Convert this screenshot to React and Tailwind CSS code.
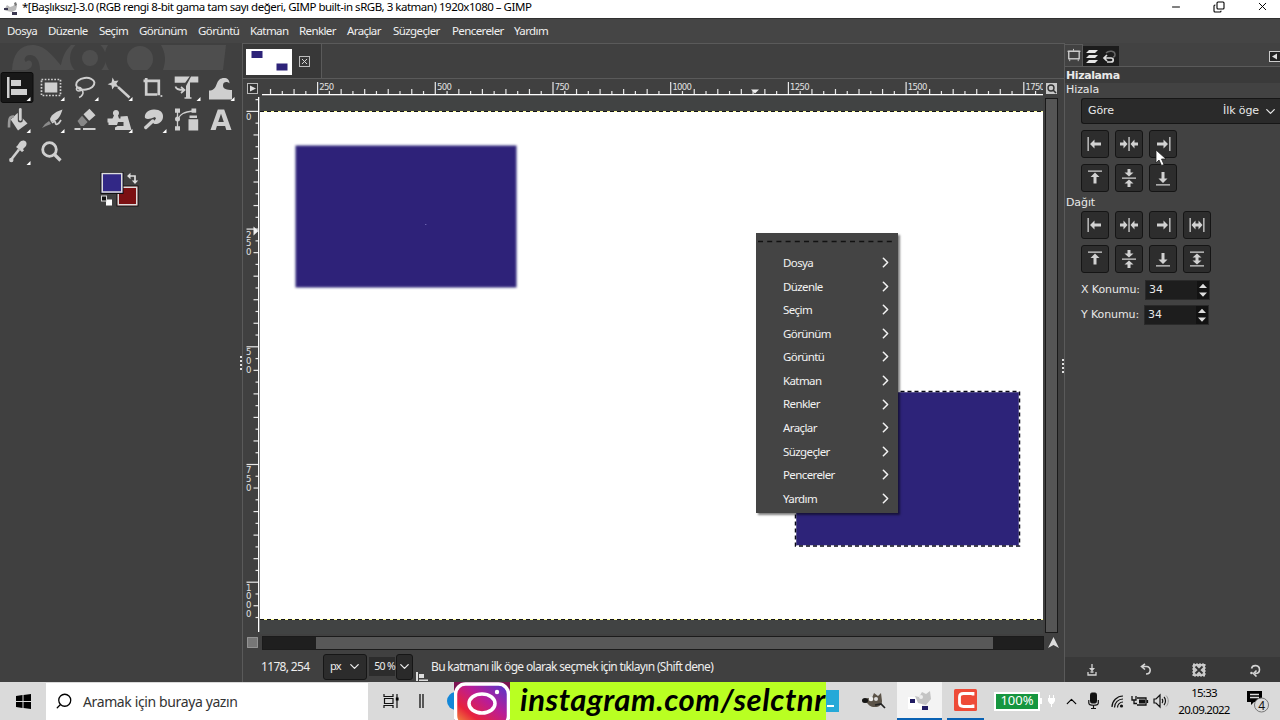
import {
  Minus,
  Copy,
  X,
  ChevronDown,
  ChevronUp,
  ChevronRight,
  Search,
} from "lucide-react";

const MENUS = [
  ["Dosya", "w-[41px]"],
  ["Düzenle", "w-[51px]"],
  ["Seçim", "w-[40px]"],
  ["Görünüm", "w-[59px]"],
  ["Görüntü", "w-[52px]"],
  ["Katman", "w-[49px]"],
  ["Renkler", "w-[48px]"],
  ["Araçlar", "w-[46px]"],
  ["Süzgeçler", "w-[59px]"],
  ["Pencereler", "w-[62px]"],
  ["Yardım", "w-[40px]"],
];

const UI = "font-['Noto_Sans',sans-serif]";
const PANEL = "font-['DejaVu_Sans',sans-serif]";

function TitleBar() {
  return (
    <header className="flex h-[18px] items-center bg-white text-black">
      <svg className="ml-[3px] h-[14px] w-4" viewBox="0 0 16 14">
        <path d="M4 3l3 2 3-1 3-3 1 3-1 4-4 2-5-1-3-1z" fill="#b9b9b9" />
        <rect x="1" y="6" width="4" height="2" fill="#3b3850" />
        <rect x="9" y="10" width="5" height="3" fill="#3b3850" />
        <path d="M11 1l2-1 1 3-2 1z" fill="#777" />
      </svg>
      <span
        className={`${UI} ml-[3px] -mt-[4px] w-[520px] whitespace-nowrap text-[11.5px] tracking-[-0.48px]`}
      >
        *[Başlıksız]-3.0 (RGB rengi 8-bit gama tam sayı değeri, GIMP built-in
        sRGB, 3 katman) 1920x1080 – GIMP
      </span>
      <div className="-mt-[5px] ml-auto flex items-center gap-[31px] pr-[11px]">
        <Minus size={12} strokeWidth={2} />
        <Copy size={12} strokeWidth={2.2} className="-scale-y-100 -scale-x-100 rotate-90" />
        <X size={13} strokeWidth={1.8} />
      </div>
    </header>
  );
}

function MenuBar() {
  return (
    <nav
      className={`${UI} flex h-[25px] items-center border-t border-[#303030] bg-[#454545] pl-[7px] text-[11.5px] tracking-[-0.6px] text-[#f0f0f0]`}
    >
      {MENUS.map(([name, width]) => (
        <span key={name} className={`${width} whitespace-nowrap`}>
          {name}
        </span>
      ))}
    </nav>
  );
}

const TOOLS = [
  // align
  <>
    <path d="M7 5h2.5v21H7zM11 8h10v6H11zM11 17h16v6H11z" />
  </>,
  // rectangle select
  <>
    <rect x="10.7" y="10.5" width="12.6" height="10" />
    <rect x="7.5" y="7.500" width="19" height="16" fill="none" stroke="#d0d0d0" strokeWidth="1.7" strokeDasharray="1.7 1.5" />
  </>,
  // lasso
  <>
    <g fill="none" stroke="#cfcfcf" strokeWidth="2">
      <ellipse cx="17.300" cy="11.800" rx="9.200" ry="5.800" transform="rotate(-8 17 12)" />
      <path d="M9.500 15c-2 2-1 4 1.500 4s3-3 .5-3.500c2 2 5 4 3 7-.8 1.500-2 2.500-3.500 3" strokeWidth="1.600" />
    </g>
  </>,
  // fuzzy select
  <>
    <path d="M10.500 5.500l2 3.500 4-.6-2.200 3.400 2.200 3.200-4-.6-2.300 3.200-.6-4-4-1.400 4-1.800z" />
    <path d="M16 15l11.500 10.500" stroke="#cfcfcf" strokeWidth="2.400" />
  </>,
  // crop
  <>
    <path d="M10.200 6v16.500h11M7.500 8.800h15.300v14.500" fill="none" stroke="#cfcfcf" strokeWidth="2.700" />
    <path d="M24.500 24h1.800" stroke="#cfcfcf" strokeWidth="1.800" />
  </>,
  // unified transform
  <>
    <path d="M4.700 4.500h15l-4.500 6.300H4.700zM21 4.500h7.300v6H20v14.800h1.500v1.500h-7v-1.500H16V14z" />
    <path d="M5.500 14.500c.5 3 3 3.500 8 3.500M11 15l3.500 3-3.500 3" fill="none" stroke="#cfcfcf" strokeWidth="1.700" />
  </>,
  // warp
  <>
    <path d="M5 27.500V18.500c4 0 6-2 7.500-6 1.500-4.500 4-6.500 7.500-6.500 3.500 0 5.500 2 5.500 5.500-1.500-2-6.500-2.500-6.500 2 0 3.500 4 4.500 9 4.500v9.500z" />
  </>,
  // bucket fill
  <>
    <path d="M10.700 15.500L17.500 9l10 10.500-9.500 7z" />
    <path d="M14 12.500c-4.500-.5-5 2-5 11" fill="none" stroke="#999" strokeWidth="2.600" />
    <path d="M20.300 4v12" stroke="#404040" strokeWidth="5" strokeLinecap="round" />
    <path d="M20.300 5.500v10" stroke="#cfcfcf" strokeWidth="2.800" strokeLinecap="round" />
  </>,
  // paintbrush
  <>
    <path d="M28.500 5.500c-5 1.500-11 4.500-12.500 9.500l1 3 3.500-1c4-2 6-5 8-11.500z" />
    <path d="M18 19c1.500-1.500 3.500-2 3.500 0s2.500 2.500 5.500-3" fill="none" stroke="#cfcfcf" strokeWidth="1.700" />
    <path d="M15 17l2 3-5 2-4 2 3-4z" fill="#8b8b8b" />
  </>,
  // eraser
  <>
    <path d="M21.500 4.800l6 6.400-6.300 5.500-5.700-6.400z" />
    <path d="M14 11.800l5.600 6.200-4 4h-2.800L9.500 17z" fill="#878787" />
    <path d="M6.500 25h6M15 25h12.500" stroke="#cfcfcf" strokeWidth="1.800" />
  </>,
  // clone
  <>
    <path d="M5.500 14.500h5l1.500-3c-2-2-1-5.500 2-5.500s4 3.500 2 5.500l1 3h3.500V18H16l-1 3H6.500v-2.500h-1z" />
    <path d="M18.500 12.500l7-.5 4 14H13v-2.500l2.500-1.500h6v-4h-3z" />
  </>,
  // smudge
  <>
    <path d="M9 14c-1-5 4-9 9.500-8.500C24 5.500 27.500 8.500 27 13c-.3 4-3 6.500-6.500 7-2 .2-3-.4-3.500-1.500l3-4-1-1.500-4 1.500c-2 .5-4 1-6-.5z" />
    <path d="M9.800 23.500l7-6.500" stroke="#cfcfcf" strokeWidth="3.400" strokeLinecap="round" />
  </>,
  // paths
  <>
    <path d="M7.500 7v18M8 15c2-5 6-7 15-8" fill="none" stroke="#cfcfcf" strokeWidth="1.300" />
    <path d="M5 4.500h5v4.300H5zM5 22.300h5v4.300H5zM21.500 4.500h4.700v4.300h-4.700zM19.500 11.500h7.500v2.500h-7.500zM18.500 15.200h9.700v11.300h-9.700z" />
    <circle cx="7.500" cy="15" r="2.500" />
  </>,
  // text
  <>
    <path d="M13.800 5.500h6.400l7.300 20.500h-5.200l-1.200-4h-8.200l-1.200 4H6.500zM14.200 18h5.600L17 9.800z" fillRule="evenodd" />
  </>,
  // color picker
  <>
    <path d="M19.500 6.500c2.500-4 9-2 6.500 3.500l-3 3 1 1.500-2 1.500-6-5 1.500-1.500z" />
    <path d="M19 13.500l-7 9" stroke="#cfcfcf" strokeWidth="2.600" />
    <circle cx="11.300" cy="24" r="2.200" />
  </>,
  // zoom
  <>
    <circle cx="15.500" cy="13.500" r="6.800" fill="none" stroke="#cfcfcf" strokeWidth="2.800" />
    <path d="M20.500 18.500l6 6" stroke="#cfcfcf" strokeWidth="3.200" />
  </>,
];

// tools without a group menu
const NO_CORNER = [4, 9, 12, 13, 15];

function Toolbox() {
  return (
    <aside className="flex w-[242px] shrink-0 items-start bg-[#404040]">
      <div className="w-[240px]">
        <svg className="block h-[29px] w-[240px]" viewBox="0 0 240 29">
          <g fill="#4e4e4e">
            <path d="M12 27c1-16 8-25 20-25 13 0 19 9 33 25H40c0-9-4-15-10-15-5 0-7 5-4 7 3-3 6-1 6 2 0 4-4 6-8 6z" />
            <path d="M60 27c2-11 4-18 11-25h37c-5 8-4 17 1 25z" />
            <path d="M161 2h65l-3 25h-60c3-9 3-16-2-25z" />
            <circle cx="140" cy="16" r="13" />
          </g>
          <circle cx="88" cy="15" r="18" fill="#404040" />
          <circle cx="90" cy="15" r="8" fill="#4e4e4e" />
          <rect y="27" width="240" height="2" fill="#404040" />
        </svg>
        <div className="grid w-[238px] grid-cols-7">
          {TOOLS.map((icon, i) => (
            <svg key={i} className="h-8 w-[34px]" viewBox="0 0 34 32" fill="#cfcfcf">
              {i === 0 && (
                <rect x="1" y=".5" width="32" height="30" rx="2" fill="#181818" stroke="#0c0c0c" />
              )}
              {icon}
              {!NO_CORNER.includes(i) && <path d="M30.500 25v4h-4z" fill="#fff" />}
            </svg>
          ))}
        </div>
        <svg className="ml-[100px] mt-[4px] block h-10 w-10" viewBox="0 0 40 40">
          <rect x="17" y="14" width="21" height="20" fill="#7b1012" stroke="#111" />
          <rect x="18.250" y="15.250" width="18.500" height="17.500" fill="#7b1012" stroke="#ddd" strokeWidth="1.500" />
          <rect x="1" y=".5" width="22" height="21" fill="#322886" stroke="#111" />
          <rect x="2.250" y="1.500" width="19.500" height="18.500" fill="#322886" stroke="#ddd" strokeWidth="1.500" />
          <path d="M28 4h7v6" fill="none" stroke="#ddd" strokeWidth="1.700" />
          <path d="M30.500 .8v6.400L27 4zM31.800 8.500h6.400L35 12z" fill="#ddd" />
          <rect x="6" y="27.500" width="6" height="6" fill="#fff" />
          <rect x="1.500" y="24" width="5" height="5" fill="#111" stroke="#ddd" />
        </svg>
      </div>
      <div className="flex h-full items-center">
        <Grip />
      </div>
    </aside>
  );
}

function Grip() {
  return (
    <span className="flex flex-col gap-[2px]">
      {[0, 1, 2, 3].map((n) => (
        <i key={n} className="h-[2px] w-[2px] bg-[#e0e0e0]" />
      ))}
    </span>
  );
}

const STEP = 11.77;

function HorizontalRuler() {
  const ticks = [];
  for (let i = 6; i < 72; i++) ticks.push(i);
  return (
    <svg className="block h-[18px] w-[784px] shrink-0" viewBox="0 0 784 18">
      {ticks.map((i) => {
        const x = 199.8 + i * STEP - 259;
        const major = i % 10 === 0;
        const h = major ? 12 : i % 2 ? 3 : 5;
        return (
          <g key={i}>
            <rect x={x - 0.5} y={14 - h} width="1.200" height={h} fill="#e8e8e8" />
            {major && (
              <text x={x + 1.8} y="10" fontSize="8.500" letterSpacing="-.7" fill="#e0e0e0" className={PANEL}>
                {i * 25}
              </text>
            )}
          </g>
        );
      })}
      <rect x="3" y="14" width="781" height="1.300" fill="#fff" />
      <path d="M492 9.500h8l-4 4z" fill="#eee" />
    </svg>
  );
}

function VerticalRuler() {
  const ticks = [];
  for (let i = -1; i < 44; i++) ticks.push(i);
  return (
    <svg className="block h-[537px] w-[15px] shrink-0" viewBox="0 0 15 537">
      {ticks.map((i) => {
        const y = 14.3 + i * STEP;
        const major = i % 10 === 0;
        const w = major ? 12 : i % 2 ? 3 : 5;
        return (
          <g key={i}>
            <rect x={13.5 - w} y={y - 0.5} width={w} height="1.200" fill="#e8e8e8" />
            {major &&
              String(i * 25)
                .split("")
                .map((d, n) => (
                  <text key={n} x="1" y={y + 8.5 + n * 8.8} fontSize="8.500" fill="#e0e0e0" className={PANEL}>
                    {d}
                  </text>
                ))}
          </g>
        );
      })}
      <rect x="13" width="1.300" height="535" fill="#fff" />
      <path d="M8.500 129.500v9l5-4.500z" fill="#eee" />
    </svg>
  );
}

function ContextMenu() {
  return (
    <div
      className={`${UI} absolute left-[496px] top-[136px] h-[280px] w-[142px] bg-[#444] pt-[7px] text-[11.5px] tracking-[-0.6px] text-[#f2f2f2] shadow-[2px_2px_2px_rgba(0,0,0,.5)]`}
    >
      <svg className="block h-[3px] w-[142px]">
        <path d="M2 1.500h138" stroke="#111" strokeWidth="1.300" strokeDasharray="5 4.200" />
      </svg>
      <ul className="pt-[8px]">
        {MENUS.map(([name]) => (
          <li key={name} className="flex h-[23.55px] items-center justify-between pl-[27px] pr-[4px]">
            {name}
            <ChevronRight size={17} strokeWidth={2.2} />
          </li>
        ))}
      </ul>
    </div>
  );
}

function Canvas() {
  return (
    <div className="relative h-[537px] w-[783px] shrink-0 overflow-hidden bg-[#414343]">
      <svg className="absolute left-0 top-0 h-[537px] w-[783px]" viewBox="0 0 783 537">
        <defs>
          <filter id="soft" x="-2%" y="-2%" width="104%" height="104%">
            <feGaussianBlur stdDeviation=".9" />
          </filter>
        </defs>
        <rect y="14" width="783" height="509" fill="#fff" />
        <path d="M0 14.500h783M0 522.500h783" stroke="#ffffa0" />
        <path d="M0 14.500h783M0 522.500h783" stroke="#151515" strokeDasharray="4 3" />
        <rect x="35.500" y="48.500" width="221" height="142" fill="#2d2379" filter="url(#soft)" />
        <rect x="165.300" y="127" width="1" height="1" fill="#827bc4" />
        <rect x="535.500" y="294.500" width="224" height="154.500" fill="#2d2379" />
        <rect x="535.500" y="294.500" width="224" height="154.500" fill="none" stroke="#fff" strokeWidth="1.500" />
        <rect x="535.500" y="294.500" width="224" height="154.500" fill="none" stroke="#080818" strokeWidth="1.500" strokeDasharray="4 3" />
      </svg>
      <ContextMenu />
    </div>
  );
}

function ImageWindow() {
  return (
    <main className="flex w-[822px] shrink-0 flex-col border-l border-[#5a5a5a] bg-[#404040]">
      <div className="flex h-[36px] border-b border-t border-[#5a5a5a]">
        <div className="flex h-full w-[79px] items-start border-r border-[#5a5a5a] bg-[#383838] pl-[3px] pt-[5px]">
          <svg className="h-[26px] w-[46px]" viewBox="0 0 46 26">
            <rect width="46" height="26" fill="#fff" />
            <rect x="5.500" y="2" width="11" height="7" fill="#2d2379" />
            <rect x="30.500" y="14.500" width="11" height="7" fill="#2d2379" />
          </svg>
          <span className="ml-[7px] mt-[7px] flex h-[11px] w-[11px] items-center justify-center border border-[#bdbdbd]">
            <X size={9} strokeWidth={2.6} className="shrink-0 text-[#ddd]" />
          </span>
        </div>
      </div>
      <div className="flex h-[18px] items-center pl-[4px] pt-px">
        <svg className="h-[11px] w-[12px] shrink-0" viewBox="0 0 12 11">
          <rect x=".5" y=".5" width="10" height="10" fill="#353535" stroke="#bbb" />
          <path d="M3 2.500l6 3-6 3z" fill="#ddd" />
        </svg>
        <HorizontalRuler />
        <svg className="ml-[2px] h-[13px] w-[13px] shrink-0" viewBox="0 0 13 13">
          <rect x="1" y="1" width="11" height="11" fill="#c8c8c8" />
          <circle cx="6" cy="6" r="3" fill="none" stroke="#333" strokeWidth="1.400" />
          <path d="M8 8l3 3" stroke="#333" strokeWidth="1.600" />
        </svg>
      </div>
      <div className="flex h-[537px] pl-[2px]">
        <VerticalRuler />
        <Canvas />
        <div className="ml-[2px] mt-[1px] h-[535px] w-[13px] shrink-0 border border-[#191919] bg-[#555]" />
        <div className="flex items-center pl-[4px]">
          <Grip />
        </div>
      </div>
      <div className="flex h-[17px] items-center pl-[4px]">
        <svg className="mr-[4px] h-[11px] w-[11px]" viewBox="0 0 11 11">
          <rect x=".5" y=".5" width="10" height="10" fill="#777" stroke="#ccc" strokeDasharray="1 1" />
        </svg>
        <div className="h-[14px] w-[782px] border border-[#1b1b1b] bg-[#1f1f1f] pl-[53px]">
          <div className="h-full w-[677px] bg-[#585858]" />
        </div>
        <svg className="ml-[3px] h-[13px] w-[13px]" viewBox="0 0 13 13">
          <path d="M6.500 1l5.500 11-5.500-3L1 12z" fill="#ddd" />
        </svg>
      </div>
      <div className={`${UI} flex h-[31px] items-center pl-[18px] text-[12px] tracking-[-0.67px] text-[#eee]`}>
        <span className="w-[62px]">1178, 254</span>
        <span className="flex h-[26px] w-[44px] items-center justify-between rounded-[3px] border border-[#161616] bg-[#2c2c2c] pl-[6px] pr-[4px] text-[11px]">
          px
          <ChevronDown size={15} strokeWidth={2} />
        </span>
        <span className="ml-[2px] flex h-[19px] w-[26px] items-center justify-end whitespace-nowrap bg-[#2c2c2c] text-[10.5px]">
          50 %
        </span>
        <span className="ml-px flex h-[26px] w-[17px] items-center justify-center rounded-[3px] border border-[#161616] bg-[#2a2a2a]">
          <ChevronDown size={15} strokeWidth={2} className="shrink-0" />
        </span>
        <svg className="ml-[3px] mt-[19px] h-[9px] w-[13px]" viewBox="0 0 13 9">
          <path d="M0 0h2v9H0zM3 2h5v4H3zM3 7.500h9V9H3z" fill="#ddd" />
        </svg>
        <span className="ml-[2px] mt-px whitespace-nowrap">
          Bu katmanı ilk öge olarak seçmek için tıklayın (Shift dene)
        </span>
      </div>
    </main>
  );
}

// drawn in a 28x28 button
const ALIGN = {
  left: <path d="M6.500 7h1.300v14H6.500zM9 14l4.500-4.500v3H20v3h-6.500v3z" />,
  hcenter: <path d="M13.400 7h1.300v14h-1.300zM5 12.500h3.500V9.500L12.500 14l-4 4.500v-3H5zM23 12.500h-3.500V9.500L15.500 14l4 4.500v-3H23z" />,
  right: <path d="M20.200 7h1.300v14h-1.300zM19 14l-4.500-4.500v3H8v3h6.500v3z" />,
  hfill: <path d="M6.500 7h1.300v14H6.500zM20.200 7h1.300v14h-1.300zM8.500 14l4-4.500v3h3v-3l4 4.500-4 4.500v-3h-3v3z" />,
  top: <path d="M7 6.500h14v1.300H7zM14 8.500l4.500 4.500h-3v6.500h-3V13h-3z" />,
  vcenter: <path d="M7 13.400h14v1.300H7zM12.500 5v3.500H9.500L14 12.500l4.500-4h-3V5zM12.500 23v-3.500H9.500L14 15.500l4.500 4h-3V23z" />,
  bottom: <path d="M7 20.200h14v1.300H7zM14 19l4.500-4.500h-3V8h-3v6.500h-3z" />,
  vfill: <path d="M7 6.500h14v1.300H7zM7 20.200h14v1.300H7zM14 8.500l4.500 4h-3v3h3l-4.500 4-4.500-4h3v-3h-3z" />,
};

function AlignRow({ kinds }) {
  return (
    <div className="flex gap-[6px]">
      {kinds.map((kind) => (
        <button key={kind} className="h-7 w-7 rounded-[3px] border border-[#151515] bg-[#2d2d2d]">
          <svg className="-m-px h-7 w-7" viewBox="0 0 28 28" fill="#d2d2d2">
            {ALIGN[kind]}
          </svg>
        </button>
      ))}
    </div>
  );
}

function Position({ label, shift }) {
  return (
    <div className="flex h-5 items-center">
      <span className={shift ? "w-[63px]" : "w-[64px]"}>{label}</span>
      <span className="flex h-5 w-[65px] items-center border border-[#2a2a2a] bg-[#1d1d1d] pl-[3px]">
        34
        <svg className="ml-auto h-[18px] w-[12px] bg-[#121212]" viewBox="0 0 12 18">
          <path d="M2 7l4-4.200L10 7zM2 11.500l4 4.200 4-4.200z" fill="#ddd" />
        </svg>
      </span>
    </div>
  );
}

function ToolOptions() {
  return (
    <aside className={`${PANEL} relative flex w-[216px] flex-col border-l border-[#5a5a5a] bg-[#424242] text-[11px] tracking-[-0.1px] text-[#e8e8e8]`}>
      <div className="flex h-[24px] items-end border-b border-[#5a5a5a]">
        <svg className="h-[22px] w-[18px] border-r border-t border-[#5a5a5a]" viewBox="0 0 18 22">
          <rect x="4" y="6.500" width="11" height="8" fill="none" stroke="#ddd" strokeWidth="1.300" />
          <path d="M2.500 6.500h14M9 4v2M5 17v-2M14 17v-2" stroke="#ccc" />
        </svg>
        <svg className="h-[20px] w-[36px] bg-[#1c1c1c]" viewBox="0 0 36 20">
          <path d="M6 4h9l-3 3H3zM6 9h9l-3 3H3zM6 14h9l-3 3H3z" fill="#e5e5e5" />
          <path d="M23 7c3-3 9-2 9 1.500 0 1.500-1 2.500-2 2.500" fill="none" stroke="#666" strokeWidth="1.500" />
          <path d="M21 12h7c3 0 3 4 0 4h-4M24 9l-3 3 3 3" fill="none" stroke="#ddd" strokeWidth="1.700" />
        </svg>
        <svg className="mb-[4px] ml-auto h-[11px] w-[11px]" viewBox="0 0 11 11">
          <rect x=".5" y=".5" width="12" height="10" fill="#222" stroke="#ccc" />
          <path d="M8 2.500v6l-5-3z" fill="#ddd" />
        </svg>
      </div>
      <div className="h-[16px] bg-[#3a3a3a] pl-[1px] font-bold leading-[18px] tracking-[-0.4px]">Hizalama</div>
      <div className="h-[15px] pl-[1px] leading-[14px]">Hizala</div>
      <div className="pl-[16px]">
        <div className="flex h-[26px] items-center rounded-l-[3px] border border-r-0 border-[#161616] bg-[#2a2a2a] pl-[6px] pr-[2px] pt-px">
          Göre
          <span className="ml-auto mr-[4px]">İlk öge</span>
          <ChevronDown size={15} strokeWidth={2} />
        </div>
      </div>
      <div className="flex flex-col gap-[6px] pl-[16px] pt-[6px]">
        <AlignRow kinds={["left", "hcenter", "right"]} />
        <AlignRow kinds={["top", "vcenter", "bottom"]} />
      </div>
      <div className="h-[19px] pl-[1px] leading-[22px]">Dağıt</div>
      <div className="flex flex-col gap-[6px] pl-[16px]">
        <AlignRow kinds={["left", "hcenter", "right", "hfill"]} />
        <AlignRow kinds={["top", "vcenter", "bottom", "vfill"]} />
      </div>
      <div className="flex flex-col gap-[5px] pl-[16px] pt-[7px]">
        <Position label="X Konumu:" />
        <Position label="Y Konumu:" shift />
      </div>
      <div className="mt-auto flex h-[25px] items-center bg-[#393939] pl-[21px]">
        <svg className="h-[14px] w-[190px] shrink-0" viewBox="0 0 190 14" fill="none" stroke="#d4d4d4">
          <path d="M6 1v5M2 9v3h8V9M4.500 9h3" strokeWidth="1.300" />
          <path d="M3 5h6L6 8.500z" fill="#d4d4d4" stroke="none" />
          <path d="M55.500 3.500h5c5 0 5 7.500-.5 7.500M59 .8l-3.500 2.700L59 6.500" strokeWidth="1.600" />
          <rect x="107" y="1" width="12" height="12" fill="#c8c8c8" strokeDasharray="2 1" />
          <path d="M109.500 3.500l7 7M116.500 3.500l-7 7" stroke="#333" strokeWidth="1.800" />
          <path d="M165.500 5.500c1-4 8-4 8 1.200 0 2.500-2 3.800-4.500 3.800M170.500 7.500l-3 3 3 3" strokeWidth="1.600" />
          <circle cx="165.500" cy="10" r="1.300" fill="#d4d4d4" stroke="none" />
        </svg>
      </div>
      {/* mouse pointer */}
      <svg className="absolute left-[90px] top-[106px] h-[18px] w-[12px]" viewBox="0 0 12 18">
        <path d="M1 1v13l3-3 2.500 5.500 2.500-1L6.500 10H11z" fill="#fff" stroke="#222" strokeWidth=".8" />
      </svg>
    </aside>
  );
}

function InstagramBanner() {
  return (
    <div className="flex h-[38px] w-[372px] overflow-hidden bg-[#b9ff22]">
      <svg className="h-[38px] w-14 shrink-0" viewBox="0 0 56 38">
        <defs>
          <linearGradient id="ig" x1="0" y1="1" x2="1" y2="0">
            <stop offset="0" stopColor="#f3a73c" />
            <stop offset=".28" stopColor="#e8243c" />
            <stop offset=".6" stopColor="#b91c98" />
            <stop offset="1" stopColor="#4a3ad0" />
          </linearGradient>
        </defs>
        <rect width="56" height="38" fill="#7d1352" />
        <rect x="1.500" y="2" width="53" height="42" rx="10" fill="url(#ig)" stroke="#fff" strokeWidth="3.500" />
        <ellipse cx="28" cy="21.500" rx="13" ry="9.500" fill="none" stroke="#fff" strokeWidth="3.500" />
        <circle cx="43" cy="10" r="2.200" fill="#fff" />
      </svg>
      <span className="ml-[10px] whitespace-nowrap font-['Lato',sans-serif] text-[31px] font-bold italic leading-[35px] tracking-[0.6px] text-black">
        instagram.com/selctnr
      </span>
    </div>
  );
}

function Taskbar() {
  return (
    <footer className={`${UI} flex h-[38px] items-center bg-[#dadada] text-black`}>
      <div className="flex h-full w-[46px] items-center justify-center">
        <svg className="h-[15px] w-[15px]" viewBox="0 0 15 15">
          <path d="M0 2l6.500-1v6H0zM7.500 1L15 0v7H7.500zM0 8h6.500v6L0 13zM7.500 8H15v7l-7.500-1z" />
        </svg>
      </div>
      <div className="flex h-[37px] w-[322px] items-center bg-white pl-[9px] text-[14px] tracking-[-0.38px] text-[#333]">
        <Search size={18} strokeWidth={1.7} className="-scale-x-100 text-black" />
        <span className="ml-[10px] whitespace-nowrap">Aramak için buraya yazın</span>
      </div>
      <svg className="ml-[14px] h-[20px] w-[72px]" viewBox="0 0 72 20">
        <path d="M2 3v2.500h9V3M2 17v-2.500h9V17M2.500 7.500h8.500v5H2.500zM15 3v14" fill="none" stroke="#111" strokeWidth="1.200" />
        <rect x="13.800" y="6.500" width="2.800" height="3" />
        <path d="M38 3v14M41 3v14" stroke="#111" strokeWidth="1.300" />
        <circle cx="74" cy="10" r="9" fill="#1387d8" />
      </svg>
      <InstagramBanner />
      <div className="flex h-[22px] w-[13px] items-end bg-[#25a9d8] pb-[5px]">
        <i className="ml-px h-[2px] w-[7px] bg-white" />
      </div>
      <svg className="ml-[22px] h-[20px] w-[25px]" viewBox="0 0 25 20">
        <path d="M1 9l6-2 4 0 2-5 4 3 3-3 1 8c0 4-3 6-7 6-5 0-6-2-8-4l-4-1z" fill="#5b5348" />
        <circle cx="10" cy="8" r="2.300" fill="#eee" />
        <circle cx="15" cy="8" r="2" fill="#ddd" />
        <ellipse cx="4" cy="9.500" rx="3" ry="2.500" fill="#151515" />
        <path d="M14 14l6-1 4 4" fill="none" stroke="#222" strokeWidth="1.700" />
      </svg>
      <div className="ml-[11px] flex h-full w-[45px] items-center justify-center border-b-2 border-[#0a62b3] bg-[#f3f3f3]">
        <svg className="h-[24px] w-[28px]" viewBox="0 0 28 24">
          <rect x="2" y="9" width="14" height="12" fill="#fff" />
          <path d="M9 8l4 1 3-5 4 2 4-3 1 8-5 6-8-2z" fill="#c4c4c4" />
          <circle cx="15" cy="9" r="2" fill="#eee" />
          <rect x="4" y="11" width="5" height="4" fill="#211c63" />
          <rect x="16" y="18" width="6" height="4" fill="#211c63" />
        </svg>
      </div>
      <div className="ml-[5px] flex h-full w-[37px] items-center justify-center border-b-2 border-[#0a62b3]">
        <svg className="h-[22px] w-[23px]" viewBox="0 0 23 22">
          <rect width="23" height="22" rx="1.500" fill="#ee4b38" />
          <path d="M19 6.500V4.500H9.500C7 4.500 5.500 6 5.500 8v6c0 2 1.500 3.500 4 3.500H19v-2" fill="none" stroke="#fff" strokeWidth="2.800" />
        </svg>
      </div>
      <div className="ml-[10px] flex h-[19px] w-[46px] items-center justify-center border-2 border-white bg-[#16963f] text-[13px] text-white">
        100%
      </div>
      <svg className="h-[12px] w-[16px]" viewBox="0 0 16 12">
        <path d="M0 3h2v6H0zM8 3h7v3l-2 3h-3L8 6zM9 0h1v3H9zM13 0h1v3h-1zM11 9h1v3h-1z" fill="#fff" />
      </svg>
      <ChevronUp size={17} strokeWidth={1.7} className="ml-[7px]" />
      <svg className="ml-[7px] h-[18px] w-[82px]" viewBox="0 0 80 18" fill="none" stroke="#111">
        <rect x="2.500" y="1" width="6" height="10" rx="1.500" fill="#111" />
        <path d="M.8 8v3c0 3 9.500 3 9.500 0V8M5.500 13v4M3 16.500h5" strokeWidth="1.200" />
        <path d="M24 15c0-6 5-11 11-11M26.500 15.500c0-5 4-8.500 8.500-8.500M29.500 15.500c0-3 2.500-5.500 5.500-5.500" strokeWidth="1.200" />
        <circle cx="33.500" cy="14" r="1.600" fill="#111" stroke="none" />
        <path d="M49 6h9v7h-9M44 4v4h4V4M46 8v3.500h3M59.500 8v3" strokeWidth="1.300" />
        <rect x="51" y="7.500" width="6" height="4" fill="#111" stroke="none" />
        <path d="M66 7h2l4-4v12l-4-4h-2zM74 7c1 1 1 3 0 4M76 5c2 2 2 6 0 8" strokeWidth="1.200" />
        <path d="M78 3.500c3 3 3 8 0 11" stroke="#999" />
      </svg>
      <div className="ml-[7px] flex w-[56px] flex-col items-center text-[11.5px] leading-[17px] tracking-[-0.75px]">
        <span>15:33</span>
        <span>20.09.2022</span>
      </div>
      <svg className="ml-[14px] h-[24px] w-[26px]" viewBox="0 0 26 24">
        <path d="M1 2h15v11H8l-3 3v-3H1z" />
        <path d="M4 5.500h9M4 8.500h9" stroke="#ddd" strokeWidth="1.300" />
        <circle cx="15.500" cy="16" r="7" fill="#dadada" stroke="#777" />
        <text x="12.300" y="20.500" fontSize="12" fill="#111">
          4
        </text>
      </svg>
    </footer>
  );
}

export default function App() {
  return (
    <div className="flex h-[720px] w-[1280px] flex-col overflow-hidden bg-[#404040]">
      <TitleBar />
      <MenuBar />
      <div className="flex h-[639px]">
        <Toolbox />
        <ImageWindow />
        <ToolOptions />
      </div>
      <Taskbar />
    </div>
  );
}
